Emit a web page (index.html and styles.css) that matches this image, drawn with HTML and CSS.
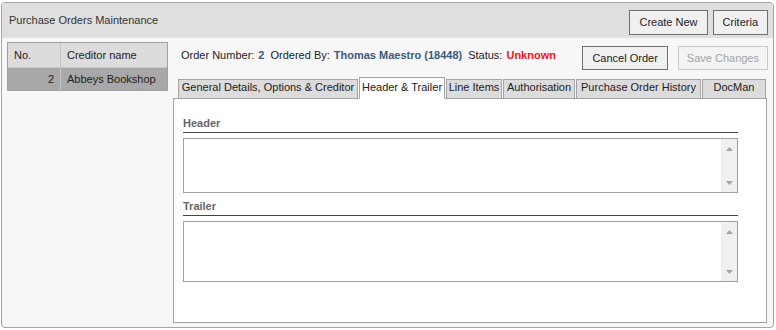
FILE: index.html
```html
<!DOCTYPE html>
<html>
<head>
<meta charset="utf-8">
<link rel="stylesheet" href="styles.css">
</head>
<body>
<div class="frame">
  <div class="titlebar">
    <span class="title">Purchase Orders Maintenance</span>
    <div class="actions">
      <button class="btn big">Create New</button>
      <button class="btn big">Criteria</button>
    </div>
  </div>
  <div class="main">
    <div class="list">
      <div class="grid">
        <div class="row head"><div class="cell c1">No.</div><div class="cell c2">Creditor name</div></div>
        <div class="row sel"><div class="cell c1 num">2</div><div class="cell c2">Abbeys Bookshop</div></div>
      </div>
    </div>
    <div class="detail">
      <div class="inforow">
        <div class="info"><span class="lbl">Order Number:</span><b class="val">2</b><span class="lbl">Ordered By:</span><b class="val">Thomas Maestro (18448)</b><span class="lbl">Status:</span><b class="status">Unknown</b></div>
        <div class="infobtns">
          <button class="btn">Cancel Order</button>
          <button class="btn disabled">Save Changes</button>
        </div>
      </div>
      <div class="tabs">
        <div class="tab t-general">General Details, Options &amp; Creditor</div>
        <div class="tab t-header active">Header &amp; Trailer</div>
        <div class="tab t-lines">Line Items</div>
        <div class="tab t-auth">Authorisation</div>
        <div class="tab t-history">Purchase Order History</div>
        <div class="tab t-docman">DocMan</div>
      </div>
      <div class="panel">
        <div class="label">Header</div>
        <div class="box">
          <div class="scroll">
            <svg class="arrow" width="7" height="4" viewBox="0 0 7 4"><path d="M3.5 0 L7 4 L0 4 Z" fill="#a4a4a4"/></svg>
            <svg class="arrow" width="7" height="4" viewBox="0 0 7 4"><path d="M0 0 L7 0 L3.5 4 Z" fill="#a4a4a4"/></svg>
          </div>
        </div>
        <div class="label second">Trailer</div>
        <div class="box tall">
          <div class="scroll">
            <svg class="arrow" width="7" height="4" viewBox="0 0 7 4"><path d="M3.5 0 L7 4 L0 4 Z" fill="#a4a4a4"/></svg>
            <svg class="arrow" width="7" height="4" viewBox="0 0 7 4"><path d="M0 0 L7 0 L3.5 4 Z" fill="#a4a4a4"/></svg>
          </div>
        </div>
      </div>
    </div>
  </div>
</div>
</body>
</html>
```
FILE: styles.css
```css
* { box-sizing: border-box; }
html, body { margin: 0; padding: 0; }
body {
  width: 776px;
  height: 330px;
  overflow: hidden;
  background: #ffffff;
  font: 11px/14px "Liberation Sans", Arial, sans-serif;
  color: #222;
}
.frame {
  margin: 2px 0 0 1px;
  width: 773px;
  height: 326px;
  border: 1px solid #a4a4a4;
  border-radius: 4px;
  background: #f7f7f7;
  display: flex;
  flex-direction: column;
  overflow: hidden;
}
.titlebar {
  height: 35px;
  flex: none;
  background: #dfdfdf;
  display: flex;
  align-items: flex-start;
  padding: 0 5px 0 7px;
}
.title {
  flex: 1;
  margin-top: 10px;
  color: #333;
}
.actions {
  display: flex;
  gap: 5px;
  margin-top: 7px;
}
.btn {
  height: 24px;
  padding: 0 9px;
  border: 1px solid #707070;
  border-radius: 0;
  background: #f0f0f0;
  font: inherit;
  line-height: 22px;
  color: #222;
  margin: 0;
}
.btn.big { height: 25px; line-height: 23px; }
.btn.disabled {
  padding: 0 8px;
  border-color: #c9c9c9;
  color: #a3a3a3;
  background: #f4f4f4;
}
.main {
  flex: 1;
  display: flex;
}
.list {
  width: 171px;
  flex: none;
  padding: 4px 0 0 5px;
}
.grid {
  width: 161px;
  border: 1px solid #a0a0a0;
}
.row { display: flex; }
.head {
  height: 25px;
  background: #dcdcdc;
  border-bottom: 1px solid #c8c8c8;
}
.sel {
  height: 22px;
  background: #a8a8a8;
}
.cell {
  display: flex;
  align-items: center;
  padding-left: 6px;
}
.c1 {
  width: 53px;
  border-right: 1px solid #c4c4c4;
}
.c2 { flex: 1; }
.num {
  justify-content: flex-end;
  padding-right: 6px;
}
.detail {
  flex: 1;
  display: flex;
  flex-direction: column;
  padding: 8px 5px 4px 0;
}
.inforow {
  display: flex;
  height: 24px;
  flex: none;
}
.info {
  flex: 1;
  padding: 2px 0 0 8px;
  white-space: nowrap;
}
.lbl { margin-right: 4px; }
.val { color: #3a5a7e; margin-right: 6px; }
.status { color: #e8161c; }
.infobtns {
  display: flex;
  gap: 10px;
}
.tabs {
  display: flex;
  align-items: flex-end;
  gap: 1px;
  padding-left: 5px;
  margin-top: 7px;
  margin-bottom: -1px;
  position: relative;
  z-index: 1;
  flex: none;
}
.tab {
  border: 1px solid #a4a4a4;
  background: #dcdcdc;
  padding: 0 0 4px;
  line-height: 14px;
  text-align: center;
  white-space: nowrap;
}
.tab.active {
  background: #fff;
  border-bottom-color: #fff;
  padding-top: 2px;
}
.t-general { width: 180px; }
.t-header { width: 86px; }
.t-lines { width: 56px; }
.t-auth { width: 72px; }
.t-history { width: 125px; }
.t-docman { width: 64px; }
.panel {
  flex: 1;
  margin-right: 1px;
  border: 1px solid #a4a4a4;
  background: #fff;
  padding: 17px 28px 0 9px;
}
.label {
  font-weight: bold;
  color: #666;
  line-height: 14px;
  padding-bottom: 2px;
  border-bottom: 1px solid #444;
  margin-bottom: 5px;
}
.label.second { margin-top: 6px; }
.box {
  height: 55px;
  border: 1px solid #a0a0a0;
  display: flex;
  justify-content: flex-end;
}
.box.tall { height: 61px; }
.scroll {
  width: 16px;
  background: #f0f0f0;
  border-left: 1px solid #ececec;
  display: flex;
  flex-direction: column;
  justify-content: space-between;
  align-items: center;
  padding: 8px 0 7px;
}
.arrow { display: block; }
```
